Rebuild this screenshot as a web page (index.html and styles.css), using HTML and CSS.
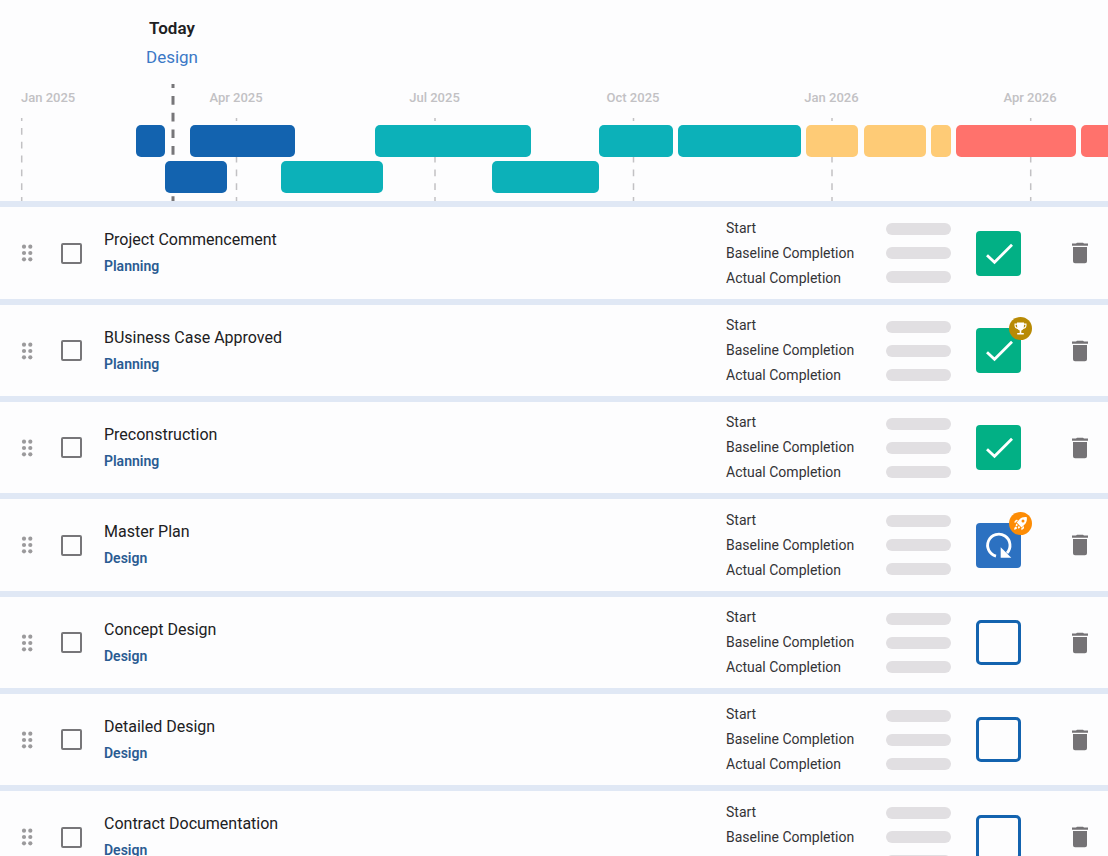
FILE: index.html
```html
<!DOCTYPE html>
<html lang="en">
<head>
<meta charset="utf-8">
<meta name="viewport" content="width=device-width, initial-scale=1">
<title>Project milestones</title>
<link rel="stylesheet" href="styles.css">
</head>
<body>
<svg class="sprite" aria-hidden="true">
  <symbol id="drag" viewBox="0 0 12 18"><g fill="#9b9a9c"><circle cx="3" cy="2.7" r="2.1"/><circle cx="9.3" cy="2.7" r="2.1"/><circle cx="3" cy="9" r="2.1"/><circle cx="9.3" cy="9" r="2.1"/><circle cx="3" cy="15.3" r="2.1"/><circle cx="9.3" cy="15.3" r="2.1"/></g></symbol>
  <symbol id="trash" viewBox="0 0 16 22"><path fill="#757376" d="M4 1.500 5 .8h6l1 .7h4v2.200H0V1.500zM1 5h14v14.300a2 2 0 0 1-2 2H3a2 2 0 0 1-2-2z"/></symbol>
  <symbol id="check" viewBox="0 0 45 45"><path d="M11 24.200 18.500 31.300 36 13.700" fill="none" stroke="#fff" stroke-width="2.800"/></symbol>
  <symbol id="progress" viewBox="0 0 45 45"><path d="M20 33.200A11.200 11.200 0 1 1 31 30" fill="none" stroke="#fff" stroke-width="2.800"/><path d="M24.700 24.200V34.800H35.300z" fill="#fff"/></symbol>
  <symbol id="trophy" viewBox="0 0 23 23"><circle cx="11.500" cy="11.500" r="11.500" fill="#b88a05"/><path fill="#fff" d="M8 5.500h7v1h2.500v2c0 2-1.300 3.200-3.200 3.500-.5.800-1.100 1.300-2 1.500V16h2.500v1.600H8.200V16h2.500v-2.500c-.9-.2-1.500-.7-2-1.500-1.900-.3-3.200-1.500-3.200-3.500v-2H8zM8 7.700H6.600v.8c0 1 .6 1.800 1.700 2.200C8.100 9.800 8 8.800 8 7.700zm7 0c0 1.100-.1 2.100-.3 3 1.100-.4 1.700-1.200 1.700-2.200v-.8z"/></symbol>
  <symbol id="rocket" viewBox="0 0 23 23"><circle cx="11.500" cy="11.500" r="11.500" fill="#fd8c05"/><path fill="#fff" fill-rule="evenodd" d="M17.800 5.200c.4 3-.4 5.400-2.200 7.400l-3 2.800-4.900-4.900 2.700-3c2-1.900 4.400-2.700 7.400-2.300zM14 7.600a1.500 1.500 0 1 0 0 3 1.500 1.500 0 0 0 0-3zM9.100 8 6.500 10.700 5 10.200l2-2.400zM15 13.900v2.300l-2.400 2-.4-1.600zM7.300 11.500l1.600 1.600-1.300 1.300-1-1zM9.700 13.800l1.500 1.500-1.400 1.400-1-1zM6.800 14.600l1.500 1.500c-.7 1.300-1.800 1.700-3.200 1.700 0-1.400.5-2.500 1.700-3.200z"/></symbol>
</svg>
<main class="app">
  <section class="timeline" aria-label="Timeline">
    <svg class="guides" aria-hidden="true">
      <g class="tick">
        <line x1="21.700" y1="118" x2="21.700" y2="201"/>
        <line x1="236.500" y1="118" x2="236.500" y2="201"/>
        <line x1="435" y1="118" x2="435" y2="201"/>
        <line x1="633.500" y1="118" x2="633.500" y2="201"/>
        <line x1="832" y1="118" x2="832" y2="201"/>
        <line x1="1030.700" y1="118" x2="1030.700" y2="201"/>
      </g>
      <line class="now" x1="173" y1="84" x2="173" y2="201"/>
    </svg>
    <div class="today">
      <strong>Today</strong>
      <a href="#design">Design</a>
    </div>
    <div class="axis">
      <span>Jan 2025</span><span>Apr 2025</span><span>Jul 2025</span><span>Oct 2025</span><span>Jan 2026</span><span>Apr 2026</span>
    </div>
    <div class="lanes">
      <div class="lane">
        <i class="bar planning" style="margin-left:136px;width:29px"></i>
        <i class="bar planning" style="margin-left:25px;width:105px"></i>
        <i class="bar design" style="margin-left:80px;width:156px"></i>
        <i class="bar design" style="margin-left:68px;width:74px"></i>
        <i class="bar design" style="margin-left:5px;width:123px"></i>
        <i class="bar tender" style="margin-left:5px;width:52px"></i>
        <i class="bar tender" style="margin-left:6px;width:62px"></i>
        <i class="bar tender" style="margin-left:5px;width:20px"></i>
        <i class="bar build" style="margin-left:5px;width:120px"></i>
        <i class="bar build" style="margin-left:5px;width:120px"></i>
      </div>
      <div class="lane">
        <i class="bar planning" style="margin-left:165px;width:62px"></i>
        <i class="bar design" style="margin-left:54px;width:102px"></i>
        <i class="bar design" style="margin-left:109px;width:107px"></i>
      </div>
    </div>
  </section>
  <ul class="list" id="list"></ul>
</main>
<script src="app.js"></script>
</body>
</html>
```

FILE: styles.css
```css
* { box-sizing: border-box; }
body { margin: 0; font-family: Roboto, "Liberation Sans", sans-serif; background: #fdfdfe; color: #202022; }
button { padding: 0; border: 0; background: none; cursor: pointer; }
svg { display: block; }
.sprite { position: absolute; width: 0; height: 0; }
.app { height: 100vh; overflow-y: auto; scrollbar-width: none; }

.timeline { position: relative; overflow: hidden; padding: 14px 0 8px; }
.guides { position: absolute; inset: 0; width: 100%; height: 100%; }
.guides line { fill: none; }
.tick { stroke: #c2c1c4; stroke-width: 1.5; stroke-dasharray: 6.8 7; stroke-dashoffset: 3.8; }
.now { stroke: #777679; stroke-width: 3; stroke-dasharray: 8.7 8; stroke-dashoffset: 4.7; }
.today { position: relative; display: flex; flex-direction: column; align-items: center; width: 344px; font-size: 17px; line-height: 29px; }
.today strong { font-weight: 600; }
.today a { color: #3b78c6; text-decoration: none; }
.axis { position: relative; display: grid; grid-auto-flow: column; grid-template-columns: 137px; grid-auto-columns: 198px 199px; justify-content: start; margin-top: 16px; font-size: 13px; font-weight: 500; line-height: 20px; color: #c2c1c4; text-align: center; }
.axis span:first-child { padding-left: 21px; text-align: left; }
.lanes { position: relative; display: grid; gap: 4px; margin-top: 17px; }
.lane { display: flex; }
.bar { flex: none; height: 32px; border-radius: 5px; }
.planning { background: #1363af; }
.design { background: #0cb1b9; }
.tender { background: #fecb76; }
.build { background: #ff726c; }

.list { display: grid; grid-auto-rows: minmax(98px, auto) minmax(97px, auto) minmax(97px, auto); margin: 0; padding: 0; list-style: none; }
.row { display: flex; align-items: center; padding: 0 20px 0 21px; border-top: 6px solid #e0e8f5; }
.handle { width: 12px; height: 18px; cursor: grab; }
.handle svg { width: 12px; height: 18px; }
.pick { flex: none; appearance: none; width: 21px; height: 21px; margin: 0 22px 0 28px; border: 2px solid #777679; border-radius: 2px; }
.pick:checked { background: #1363af; }
.name { flex: 1; min-width: 0; line-height: 27px; }
.name label { display: block; font-size: 16px; }
.name a { display: block; width: max-content; font-size: 14px; font-weight: 600; color: #2a5b92; text-decoration: none; }
.dates { flex: none; width: 160px; font-size: 14px; line-height: 25px; color: #343336; }
.values { display: grid; gap: 12px; width: 65px; margin-right: 25px; }
.values span { height: 12px; border-radius: 6px; background: #e1dfe2; }
.status { position: relative; width: 45px; height: 45px; margin-right: 51px; border-radius: 4px; }
.status > svg { width: 45px; height: 45px; }
.done { background: #02b085; }
.active { background: #2c71c1; }
.open { border: 3px solid #1363af; border-radius: 5px; }
.status .badge { position: absolute; top: -11px; right: -11px; width: 23px; height: 23px; }
.delete svg { width: 16px; height: 22px; }
```

FILE: app.js
```js
const milestones = [
  { name: "Project Commencement", phase: "Planning", state: "done" },
  { name: "BUsiness Case Approved", phase: "Planning", state: "done", badge: "trophy" },
  { name: "Preconstruction", phase: "Planning", state: "done" },
  { name: "Master Plan", phase: "Design", state: "active", badge: "rocket" },
  { name: "Concept Design", phase: "Design", state: "open" },
  { name: "Detailed Design", phase: "Design", state: "open" },
  { name: "Contract Documentation", phase: "Design", state: "open" }
];
const icons = { done: "check", active: "progress" };
const use = (id, cls = "") => `<svg class="${cls}" aria-hidden="true"><use href="#${id}"/></svg>`;

document.getElementById("list").innerHTML = milestones.map((m, i) => `
  <li class="row">
    <button class="handle" aria-label="Reorder">${use("drag")}</button>
    <input class="pick" type="checkbox" id="pick-${i}">
    <div class="name"><label for="pick-${i}">${m.name}</label><a href="#${m.phase.toLowerCase()}">${m.phase}</a></div>
    <div class="dates"><div>Start</div><div>Baseline Completion</div><div>Actual Completion</div></div>
    <div class="values"><span></span><span></span><span></span></div>
    <button class="status ${m.state}" aria-label="Status: ${m.state}">${icons[m.state] ? use(icons[m.state]) : ""}${m.badge ? use(m.badge, "badge") : ""}</button>
    <button class="delete" aria-label="Delete">${use("trash")}</button>
  </li>`).join("");
```
